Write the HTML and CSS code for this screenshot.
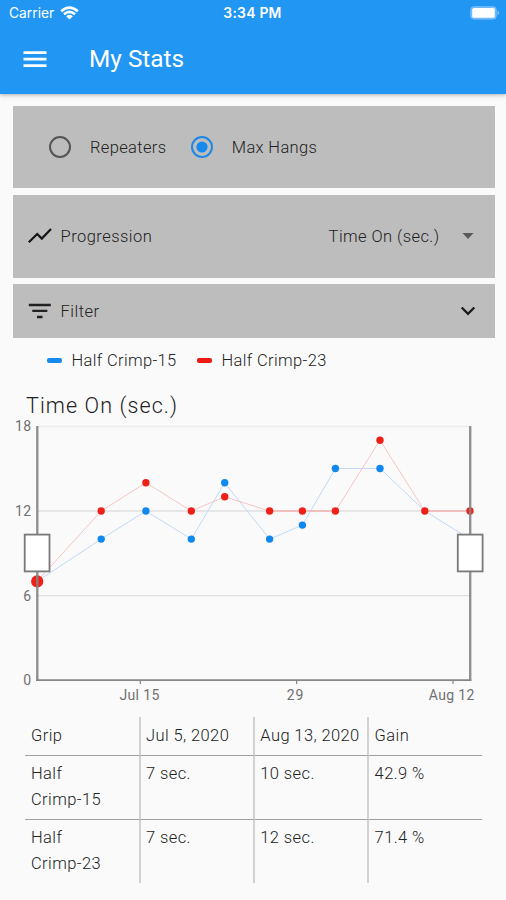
FILE: index.html
```html
<!DOCTYPE html>
<html lang="en">
<head>
<meta charset="utf-8">
<title>My Stats</title>
<link rel="stylesheet" href="styles.css">
</head>
<body>
<header class="header">
  <div class="status">
    <div class="carrier"><span>Carrier</span>
      <svg width="19" height="14" viewBox="0 0 19 14" fill="none" stroke="#fff" stroke-width="2.6"><path d="M1.2 5.3Q9.5-2 17.8 5.3M4 8.3Q9.5 3.5 15 8.3"/><path d="M6.2 10.2Q9.5 7.5 12.8 10.2L9.5 13.6Z" fill="#fff" stroke="none"/></svg>
    </div>
    <span class="clock">3:34 PM</span>
    <svg class="battery" width="31" height="14" viewBox="0 0 31 14"><rect x=".8" y=".8" width="25.4" height="12.2" rx="3" fill="#64b5f8" stroke="#83c3fa"/><rect x="2.2" y="2" width="22.6" height="9.8" rx="1.6" fill="#fff"/><path d="M27.6 4.5Q31 6.8 27.6 9.2Z" fill="#83c3fa"/></svg>
  </div>
  <div class="toolbar">
    <svg width="24" height="18" viewBox="0 0 24 18" fill="#fff"><path d="M.5 1.2h23v2.7H.5zM.5 7.7h23v2.7H.5zM.5 14.2h23v2.7H.5z"/></svg>
    <h1>My Stats</h1>
  </div>
</header>
<main>
  <section class="panel modes">
    <label class="mode"><svg width="24" height="24" viewBox="0 0 24 24" fill="none" stroke="#555" stroke-width="2"><circle cx="12" cy="12" r="10"/></svg><span>Repeaters</span></label>
    <label class="mode"><svg width="24" height="24" viewBox="0 0 24 24" fill="none" stroke="#1e88e5" stroke-width="2"><circle cx="12" cy="12" r="10"/><circle cx="12" cy="12" r="5.6" fill="#1489f0" stroke="none"/></svg><span>Max Hangs</span></label>
  </section>
  <section class="panel progression">
    <svg width="24" height="16" viewBox="0 0 24 16" fill="none" stroke="#151515" stroke-width="2.2"><path d="M.8 14.2 9.2 6l4.6 4.6L23 1"/></svg>
    <span class="t-progression">Progression</span>
    <span class="metric">Time On (sec.)</span>
    <svg class="arrow" width="12" height="6" viewBox="0 0 12 6"><path d="M.5 0h11L6 6z" fill="#5b5b5b"/></svg>
  </section>
  <section class="panel filter">
    <svg width="24" height="16" viewBox="0 0 24 16" fill="#222"><path d="M.8.8h22v2.4h-22zM4.3 6.7h15v2.4h-15zM9 12.8h5.5v2.4H9z"/></svg>
    <span class="t-filter">Filter</span>
    <svg class="chevron" width="16" height="10" viewBox="0 0 16 10" fill="none" stroke="#1b1b1b" stroke-width="2.3"><path d="M1.7 1.5 8 7.8l6.3-6.3"/></svg>
  </section>
  <div class="legend">
    <span class="key blue"></span><span>Half Crimp-15</span>
    <span class="key red"></span><span>Half Crimp-23</span>
  </div>
  <h2>Time On (sec.)</h2>
  <svg class="chart" width="506" height="292" viewBox="0 416 506 292">
    <g stroke="#e0e0e0" stroke-width="1.3"><path d="M37 426.5H470" stroke="#ececec"/><path d="M37 511H470M37 595.6H470"/></g>
    <g fill="none" stroke-width="1"><path stroke="#c3d8f7" d="M37 581.4 101.2 539.1 145.9 511 191.3 539.1 224.7 482.7 269.6 539.1 302.4 525.1 335.4 468.5H380L424.8 511 470 539.1"/><path stroke="#f7c4c4" d="M37 581.4 101.2 511 145.9 482.7 191.3 511 224.7 496.8 269.6 511H335.4L380 440.2 424.8 511H470"/></g>
    <path d="M269.6 511H335.4M424.8 511H470" stroke="#f3aaa8"/>
    <g fill="#0f88ef"><circle cx="101.2" cy="539.1" r="3.7"/><circle cx="145.9" cy="511" r="3.7"/><circle cx="191.3" cy="539.1" r="3.7"/><circle cx="224.7" cy="482.7" r="3.7"/><circle cx="269.6" cy="539.1" r="3.7"/><circle cx="302.4" cy="525.1" r="3.7"/><circle cx="335.4" cy="468.5" r="3.7"/><circle cx="380" cy="468.5" r="3.7"/></g>
    <g fill="#ef2018"><circle cx="37.2" cy="581.4" r="6.1"/><circle cx="101.2" cy="511" r="3.7"/><circle cx="145.9" cy="482.7" r="3.7"/><circle cx="191.3" cy="511" r="3.7"/><circle cx="224.7" cy="496.8" r="3.7"/><circle cx="269.6" cy="511" r="3.7"/><circle cx="302.4" cy="511" r="3.7"/><circle cx="335.4" cy="511" r="3.7"/><circle cx="380" cy="440.2" r="3.7"/><circle cx="424.8" cy="511" r="3.7"/><circle cx="470" cy="511" r="3.7"/></g>
    <g fill="none" stroke="#858585"><path d="M37.3 426V681M470.2 426V681" stroke-width="2.4" stroke-opacity=".9"/><path d="M36.2 680.2H471.3" stroke-width="1.8"/><path d="M140.3 681v3M296.6 681v3M453 681v3" stroke-width="1.2"/></g>
    <g fill="#fff" stroke="#797979" stroke-width="1.8"><rect x="24.7" y="534.6" width="24.8" height="36.8"/><rect x="457.8" y="534.6" width="24.8" height="36.8"/></g>
    <g class="axis" text-anchor="end"><text x="31" y="431.3" textLength="16">18</text><text x="31" y="516.3" textLength="16">12</text><text x="31" y="601.2">6</text><text x="31" y="685.3">0</text></g>
    <g class="axis" text-anchor="middle"><text x="139.4" y="700.2" textLength="40">Jul 15</text><text x="295" y="700.2" textLength="16.5">29</text><text x="451.6" y="700.2" textLength="45.5">Aug 12</text></g>
  </svg>
  <table>
    <thead><tr><th>Grip</th><th>Jul 5, 2020</th><th>Aug 13, 2020</th><th>Gain</th></tr></thead>
    <tbody>
      <tr><td>Half<br>Crimp-15</td><td>7 sec.</td><td>10 sec.</td><td>42.9 %</td></tr>
      <tr><td>Half<br>Crimp-23</td><td>7 sec.</td><td>12 sec.</td><td>71.4 %</td></tr>
    </tbody>
  </table>
</main>
</body>
</html>
```
FILE: styles.css
```css
* { box-sizing: border-box; }
body { margin: 0; height: 900px; overflow: hidden; background: #fafafa; color: #222; font: 300 16.5px/20px Roboto, sans-serif; }
svg { display: block; flex: none; }
h1, h2 { margin: 0; }
span { white-space: nowrap; }
.header { height: 93.5px; background: #2196f3; color: #fff; box-shadow: 0 1px 4px rgba(0,0,0,.3); }
.status { display: grid; grid-template-columns: 1fr auto 1fr; height: 26px; padding: 0 5px 0 9px; align-items: center; }
.carrier { display: flex; align-items: center; gap: 6px; font: 400 13.8px/16px Inter, sans-serif; }
.clock { margin-right: 5px; font: 600 13.9px/16px Inter, sans-serif; letter-spacing: .25px; }
.battery { justify-self: end; }
.toolbar { display: flex; align-items: center; height: 65px; padding-left: 23px; gap: 42px; }
.toolbar h1 { font: 400 24.4px/30px Roboto, sans-serif; }
main { padding-top: 12.3px; }
.panel { display: flex; align-items: center; margin: 0 11.5px 6.5px 13px; background: #bdbdbd; height: 82.7px; }
.panel span { padding-top: 2px; }
.modes { padding-left: 35px; gap: 24px; }
.mode { display: flex; align-items: center; gap: 18px; letter-spacing: .35px; }
.mode + .mode span { margin-left: -.7px; }
.progression { padding: 0 21px 0 15px; }
.t-progression, .t-filter { margin-left: 8.6px; letter-spacing: .45px; }
.metric { margin-left: auto; letter-spacing: .42px; }
.arrow { margin-left: 22px; }
.filter { height: 53.7px; padding: 0 19px 0 15px; margin-bottom: 0; }
.chevron { margin-left: auto; }
.legend { display: flex; align-items: center; height: 46px; padding-left: 47px; letter-spacing: .35px; }
.key { width: 15px; height: 5px; border-radius: 2px; margin-right: 9.5px; }
.blue { background: #168bed; }
.red { background: #ee1911; margin-left: 20.5px; }
h2 { height: 32.5px; padding: 9px 0 0 26px; font: 300 21.5px/26px Roboto, sans-serif; letter-spacing: 1.1px; }
.chart { font: 400 14px Roboto, sans-serif; }
.axis { fill: #707070; }
table { width: 457px; margin: 9px 0 0 25px; border-collapse: separate; border-spacing: 0; table-layout: fixed; }
th, td { padding: 5px 0 0 5.5px; border-right: 2.5px solid #d2d2d2; border-bottom: 1px solid #a0a0a0; text-align: left; vertical-align: top; font-weight: 300; line-height: 26px; letter-spacing: .4px; white-space: nowrap; }
th { height: 39px; padding-top: 6px; }
td { height: 63.5px; }
th:first-child { width: 115.5px; }
th:nth-child(2), th:nth-child(3) { width: 114.3px; }
th:first-child, td:first-child { padding-left: 6px; }
th:last-child, td:last-child { border-right: 0; }
tr:last-child td { border-bottom: 0; }
```
